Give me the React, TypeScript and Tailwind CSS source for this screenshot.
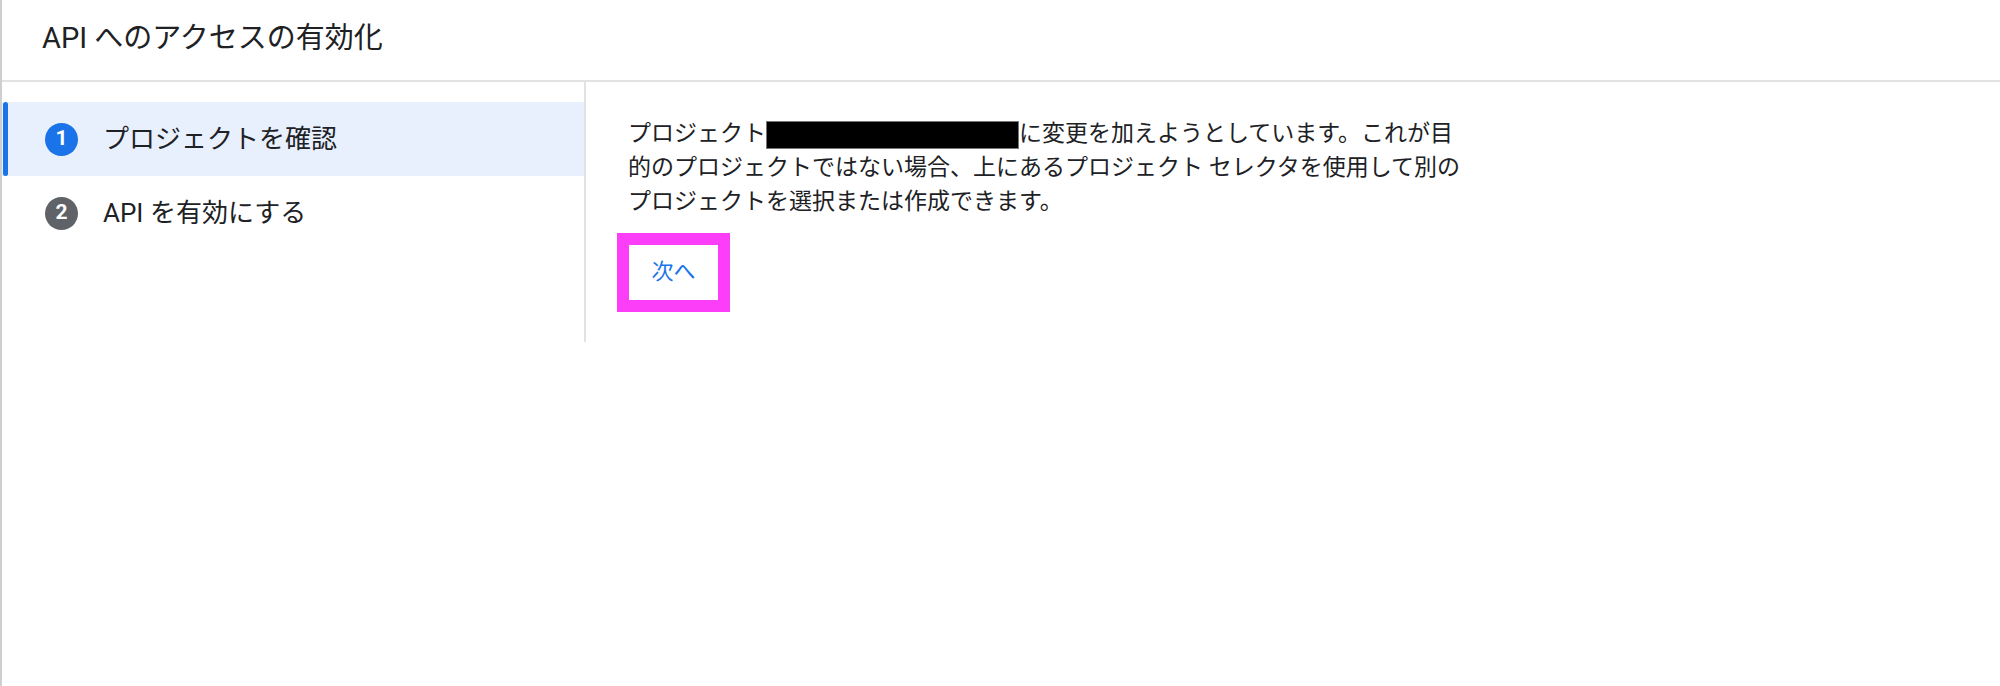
import React from "react";

const steps = [
  { n: 1, label: "プロジェクトを確認", active: true },
  { n: 2, label: "API を有効にする", active: false },
];

const StepRow = ({ n, label, active }: { n: number; label: string; active: boolean }) => (
  <div
    className={`relative flex h-[74px] items-center pl-[43px] ${active ? "bg-[#e8f0fe]" : ""}`}
  >
    {active && (
      <span className="absolute left-[1px] top-0 h-full w-[5px] rounded-full bg-[#1a73e8]" />
    )}
    <span
      className={`flex h-[33px] w-[33px] items-center justify-center rounded-full text-[21px] font-bold text-white ${
        active ? "bg-[#1a73e8]" : "bg-[#5f6368]"
      }`}
    >
      {n}
    </span>
    <span className="ml-[25px] text-[26px] text-[#202124]">{label}</span>
  </div>
);

export default function App() {
  return (
    <div
      className="h-[686px] w-[2000px] overflow-hidden border-l-2 border-[#cfcfcf] bg-white"
      style={{ fontFamily: 'Roboto, "Noto Sans CJK JP", sans-serif' }}
    >
      <header className="flex h-[82px] items-center border-b-2 border-[#e2e2e5] pb-[2px] pl-[40px]">
        <h1 className="text-[29px] font-normal text-[#202124]">API へのアクセスの有効化</h1>
      </header>

      <div className="flex">
        <nav className="h-[260px] w-[584px] shrink-0 border-r-2 border-[#e2e2e5] pt-[20px]">
          {steps.map((s) => (
            <StepRow key={s.n} {...s} />
          ))}
        </nav>

        <section className="pl-[42px] pt-[35px]">
          <p className="whitespace-nowrap text-[23px] leading-[34px] text-[#202124]">
            プロジェクト
            <span className="inline-block h-[28px] w-[253px] border border-[#777] bg-black align-middle" />
            に変更を加えようとしています。これが目
            <br />
            的のプロジェクトではない場合、上にあるプロジェクト セレクタを使用して別の
            <br />
            プロジェクトを選択または作成できます。
          </p>

          <button className="-ml-[11px] mt-[14px] flex h-[79px] w-[113px] items-center justify-center border-[12px] border-[#fc3ef8] bg-white pb-[2px] text-[22px] text-[#1a73e8]">
            次へ
          </button>
        </section>
      </div>
    </div>
  );
}
